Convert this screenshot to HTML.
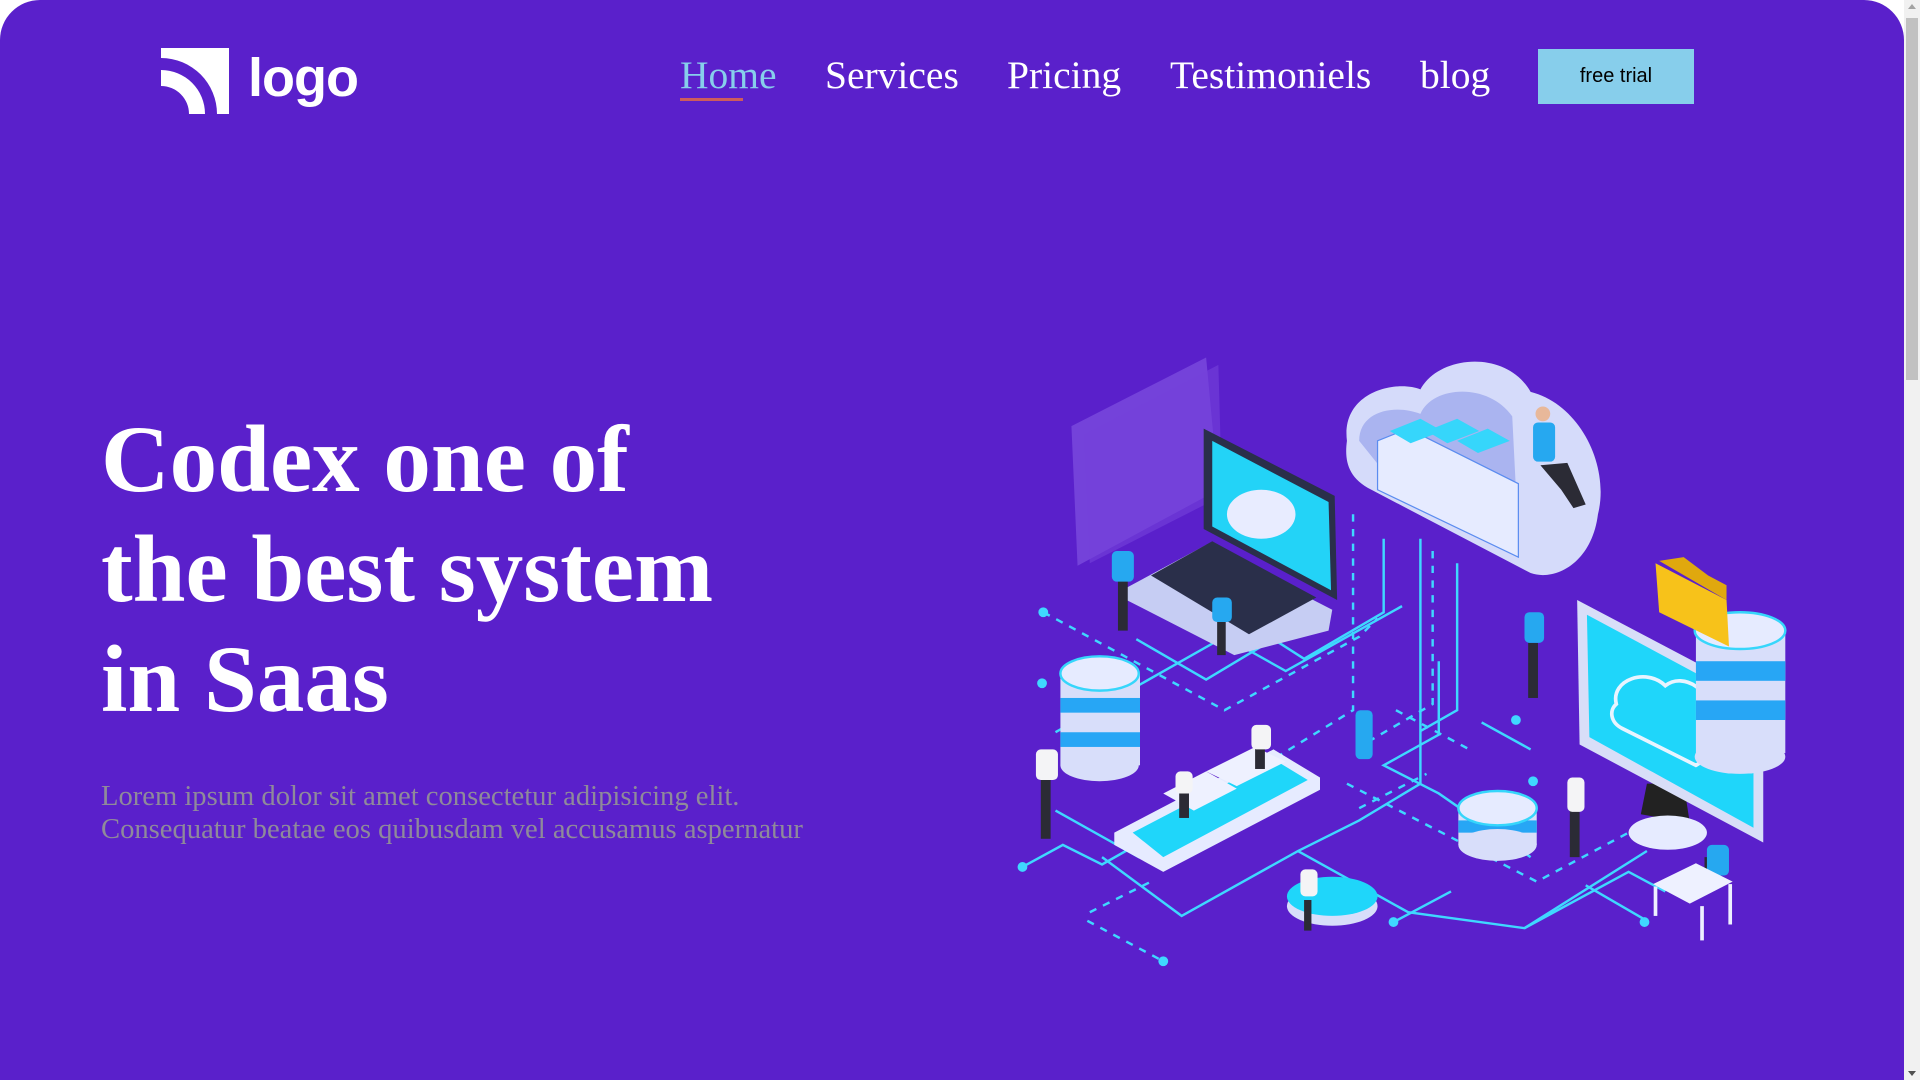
<!DOCTYPE html>
<html><head><meta charset="utf-8"><style>
html,body{margin:0;padding:0;width:1920px;height:1080px;overflow:hidden;background:#fff;}
.page{position:absolute;left:0;top:0;width:1904px;height:1080px;background:#5a20cb;border-radius:40px 40px 0 0;overflow:hidden;}
.sb{position:absolute;right:0;top:0;width:16px;height:1080px;background:#f1f1f1;}
.sb .th{position:absolute;left:2px;right:2px;top:18px;height:362px;background:#c1c1c1;}
.sb .ar{position:absolute;left:4px;top:4px;width:0;height:0;border-left:4px solid transparent;border-right:4px solid transparent;border-bottom:5px solid #a3a3a3;}
.sb .ar2{position:absolute;left:4px;bottom:4px;width:0;height:0;border-left:4px solid transparent;border-right:4px solid transparent;border-top:5px solid #505050;}
.logo-t{position:absolute;left:248px;top:47px;font:bold 54px "Liberation Sans",sans-serif;color:#fff;letter-spacing:-1px;}
.nav{position:absolute;top:52px;font:39.5px "Liberation Serif",serif;color:#fff;white-space:nowrap;}
.btn{position:absolute;left:1538px;top:49px;width:156px;height:55px;background:#87ceeb;font:20px "Liberation Sans",sans-serif;color:#000;text-align:center;line-height:55px;}
h1{position:absolute;left:101px;top:404px;margin:0;font:bold 95px/110px "Liberation Serif",serif;color:#fff;}
p{position:absolute;left:101px;top:780px;margin:0;font:28.6px/33px "Liberation Serif",serif;color:#8f8a9a;}
svg.ill{position:absolute;left:0;top:0;}
</style></head><body>
<div class="page">
<svg width="1920" height="1080" style="position:absolute;left:0;top:0">
 <defs><clipPath id="lc"><rect x="161" y="48" width="68" height="66"/></clipPath></defs>
 <g clip-path="url(#lc)" fill="#fff">
  <path d="M161 48 H229 V114 H217 A56 56 0 0 0 161 58 Z"/>
  <path d="M161 70 A44 44 0 0 1 205 114 H189 A28 28 0 0 0 161 86 Z"/>
 </g>
</svg>
<div class="logo-t">logo</div>
<div class="nav" style="left:680px;color:#87ceeb">Home</div>
<div style="position:absolute;left:680px;top:98px;width:63px;height:3px;background:#cd5c5c"></div>
<div class="nav" style="left:825px">Services</div>
<div class="nav" style="left:1007px">Pricing</div>
<div class="nav" style="left:1170px">Testimoniels</div>
<div class="nav" style="left:1420px">blog</div>
<div class="btn">free trial</div>
<h1>Codex one of<br>the best system<br>in Saas</h1>
<p>Lorem ipsum dolor sit amet consectetur adipisicing elit.<br>Consequatur beatae eos quibusdam vel accusamus aspernatur</p>

<svg class="ill" width="1920" height="1080" viewBox="0 0 1568 882">
 <g fill="none" stroke="#3fd8ff" stroke-width="2">
  <path d="M862 662 L930 700 L1000 660"/>
  <path d="M835 708 L868 690 L900 706 L960 672"/>
  <path d="M900 700 L965 748 L1060 695 L1110 670 L1160 640 L1160 440"/>
  <path d="M1060 695 L1150 745 L1245 758 L1345 695"/>
  <path d="M1140 752 L1185 728"/>
  <path d="M1245 758 L1330 712 L1360 728"/>
  <path d="M1295 723 L1345 752"/>
  <path d="M928 522 L985 555 L1040 522 L1065 538 L1130 500 L1130 440"/>
  <path d="M862 598 L1000 520 L1050 548 L1145 495"/>
  <path d="M1175 540 L1175 600 L1130 625 L1175 648 L1250 700"/>
  <path d="M1210 590 L1250 612"/>
  <path d="M1190 460 L1190 580 L1160 597"/>
 </g>
 <g fill="none" stroke="#3fd8ff" stroke-width="2" stroke-dasharray="6 6">
  <path d="M852 500 L1000 580 L1110 520 L1125 505"/>
  <path d="M1105 420 L1105 580 L1040 620"/>
  <path d="M1170 450 L1170 575 L1110 610"/>
  <path d="M1100 640 L1255 720 L1330 680"/>
  <path d="M890 745 L940 720"/>
  <path d="M888 752 L950 785"/>
  <path d="M1110 660 L1165 632"/>
  <path d="M1140 580 L1200 612"/>
 </g>
 <g fill="#3fd8ff">
  <circle cx="852" cy="500" r="4"/><circle cx="851" cy="558" r="4"/><circle cx="835" cy="708" r="4"/>
  <circle cx="950" cy="785" r="4"/><circle cx="1238" cy="588" r="4"/><circle cx="1252" cy="638" r="4"/>
  <circle cx="1138" cy="753" r="4"/><circle cx="1343" cy="753" r="4"/>
 </g>
 <g fill="#8a5ee8" opacity="0.55">
  <path d="M875 348 L985 292 L995 400 L880 462 Z"/>
  <path d="M885 355 L995 298 L998 405 L890 460 Z" opacity="0.6"/>
 </g>
 <path d="M920 480 L985 445 L1088 498 L1085 515 L1008 535 L920 490 Z" fill="#c6cdf3"/>
 <path d="M940 470 L990 442 L1075 488 L1020 518 Z" fill="#2a2f4a"/>
 <path d="M983 350 L1090 405 L1092 490 L983 432 Z" fill="#2a2f4a"/>
 <path d="M990 360 L1085 410 L1087 482 L990 430 Z" fill="#23d3f7"/>
 <ellipse cx="1030" cy="420" rx="28" ry="20" fill="#e8ecff"/>
 <path d="M1100 360 C1095 320 1140 310 1160 318 C1175 290 1230 285 1250 320 C1290 330 1315 380 1305 420 C1300 460 1270 475 1250 468 L1120 400 C1100 390 1098 375 1100 360 Z" fill="#d5dbfa"/>
 <path d="M1110 360 C1110 335 1140 330 1160 338 C1170 315 1215 312 1235 340 L1240 440 L1130 385 Z" fill="#aab4f0"/>
 <g fill="#e6ebff" stroke="#5b8cf0" stroke-width="1">
  <path d="M1125 360 L1150 350 L1240 395 L1240 455 L1125 400 Z"/>
 </g>
 <g fill="#36d6fb"><path d="M1135 352 L1160 342 L1178 352 L1152 362 Z"/><path d="M1165 352 L1190 342 L1208 352 L1182 362 Z"/><path d="M1190 360 L1215 350 L1233 360 L1207 370 Z"/></g>
 <g fill="#26a8f0"><rect x="1252" y="345" width="18" height="32" rx="4"/></g>
 <circle cx="1260" cy="338" r="6" fill="#e8b89a"/>
 <path d="M1258 380 L1275 400 L1285 415 L1295 412 L1280 378 Z" fill="#2b2b35"/>
 <path d="M1345 640 L1340 665 L1380 672 L1375 640 Z" fill="#222"/>
 <ellipse cx="1362" cy="680" rx="32" ry="14" fill="#e6ebff"/>
 <path d="M1288 490 L1440 570 L1440 688 L1290 608 Z" fill="#d8def8"/>
 <path d="M1296 502 L1432 575 L1432 676 L1298 602 Z" fill="#1fd6fa"/>
 <path d="M1320 575 C1315 555 1345 545 1360 560 C1375 548 1400 565 1395 585 C1405 600 1395 620 1385 625 L1325 595 C1315 590 1314 580 1320 575 Z" fill="none" stroke="#e8f4ff" stroke-width="3"/>
 <rect x="1385" y="515" width="73" height="100" fill="#d8defa"/>
 <rect x="1385" y="540" width="73" height="16" fill="#27a6f5"/><rect x="1385" y="572" width="73" height="16" fill="#27a6f5"/>
 <ellipse cx="1421" cy="618" rx="37" ry="14" fill="#d8defa"/>
 <ellipse cx="1421" cy="515" rx="37" ry="15" fill="#e6ebff" stroke="#36d6fb" stroke-width="2"/>
 <path d="M1352 460 L1410 490 L1412 528 L1355 500 Z" fill="#f7c21a"/>
 <path d="M1355 458 L1375 455 L1395 470 L1410 478 L1410 490 Z" fill="#e0a80e"/>
 <rect x="866" y="550" width="65" height="75" fill="#d8defa"/>
 <rect x="866" y="570" width="65" height="12" fill="#27a6f5"/><rect x="866" y="598" width="65" height="12" fill="#27a6f5"/>
 <ellipse cx="898" cy="625" rx="32" ry="13" fill="#d8defa"/>
 <ellipse cx="898" cy="550" rx="32" ry="14" fill="#e6ebff" stroke="#36d6fb" stroke-width="2"/>
 <rect x="1191" y="660" width="64" height="30" fill="#d8defa"/>
 <rect x="1191" y="670" width="64" height="10" fill="#27a6f5"/>
 <ellipse cx="1223" cy="690" rx="32" ry="13" fill="#d8defa"/>
 <ellipse cx="1223" cy="660" rx="32" ry="14" fill="#e6ebff" stroke="#36d6fb" stroke-width="2"/>
 <ellipse cx="1088" cy="740" rx="37" ry="16" fill="#d8defa"/>
 <ellipse cx="1088" cy="732" rx="37" ry="16" fill="#1fd6fa"/>
 <path d="M910 680 L1040 612 L1078 635 L1078 645 L950 712 L910 690 Z" fill="#e6ebff"/>
 <path d="M925 680 L1040 620 L1068 637 L950 700 Z" fill="#1fd6fa"/>
 <path d="M985 630 L1025 610 L1050 622 L1010 642 Z" fill="#eef1ff"/>
 <path d="M950 648 L985 630 L1010 644 L975 662 Z" fill="#eef1ff"/>
 <g fill="#2b2b35">
  <rect x="913" y="455" width="8" height="60"/><rect x="994" y="500" width="7" height="35"/>
  <rect x="850" y="630" width="8" height="55"/><rect x="1248" y="525" width="8" height="45"/>
  <rect x="1282" y="660" width="8" height="40"/><rect x="1065" y="735" width="6" height="25"/>
  <rect x="963" y="648" width="8" height="20"/><rect x="1025" y="610" width="8" height="18"/>
  <rect x="1392" y="700" width="8" height="25"/>
 </g>
 <g fill="#26a8f0"><rect x="908" y="450" width="18" height="25" rx="4"/><rect x="990" y="488" width="16" height="20" rx="4"/><rect x="1245" y="500" width="16" height="25" rx="4"/><rect x="1394" y="690" width="18" height="25" rx="4"/><rect x="1107" y="580" width="14" height="40" rx="4"/></g>
 <g fill="#f4f4f6"><rect x="846" y="612" width="18" height="25" rx="4"/><rect x="1280" y="635" width="14" height="28" rx="4"/><rect x="1022" y="592" width="16" height="20" rx="4"/><rect x="960" y="630" width="14" height="18" rx="4"/><rect x="1062" y="710" width="14" height="22" rx="4"/></g>
 <path d="M1350 722 L1385 705 L1415 720 L1380 738 Z" fill="#eef1ff"/>
 <g stroke="#eef1ff" stroke-width="3"><line x1="1352" y1="724" x2="1352" y2="748"/><line x1="1390" y1="740" x2="1390" y2="768"/><line x1="1413" y1="722" x2="1413" y2="755"/></g>
</svg>
</div>
<div class="sb"><div class="ar"></div><div class="th"></div><div class="ar2"></div></div>
</body></html>
